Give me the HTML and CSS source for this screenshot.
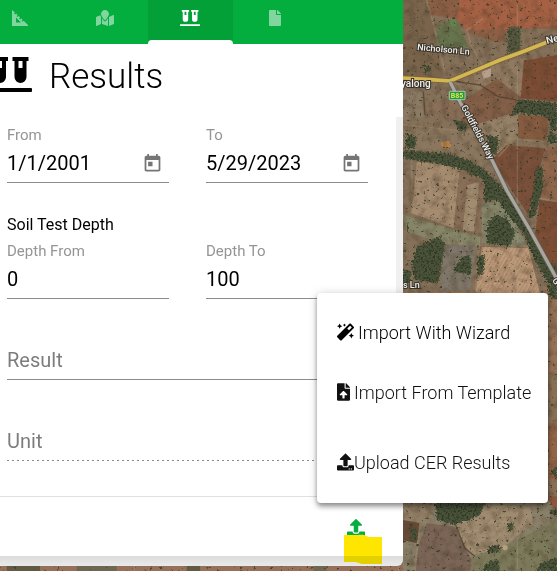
FILE: index.html
```html
<!DOCTYPE html>
<html lang="en">
<head>
<meta charset="utf-8">
<meta name="viewport" content="width=device-width, initial-scale=1">
<title>Results</title>
<link rel="stylesheet" href="styles.css">
</head>
<body>
<svg class="defs" aria-hidden="true">
  <symbol id="tubes" viewBox="0 0 44 35"><path fill-rule="evenodd" d="M4 0h16v4h-2v16a6 6 0 0 1-12 0V4H4zM10 4v7h4V4zM24.500 0h16v4h-2v16a6 6 0 0 1-12 0V4h-2zM30.500 4v7h4V4zM1 31h42a1 1 0 0 1 1 1v2a1 1 0 0 1-1 1H1a1 1 0 0 1-1-1v-2a1 1 0 0 1 1-1z"/></symbol>
  <symbol id="today" viewBox="0 0 24 24"><path d="M19 3h-1V1h-2v2H8V1H6v2H5c-1.110 0-1.990.9-1.990 2L3 19c0 1.100.89 2 2 2h14c1.100 0 2-.9 2-2V5c0-1.100-.9-2-2-2zm0 16H5V8h14v11zM7 10h5v5H7z"/></symbol>
  <symbol id="upload" viewBox="0 0 512 512"><path d="M296 384h-80c-13.300 0-24-10.700-24-24V192h-87.700c-17.800 0-26.700-21.500-14.100-34.100L242.300 5.700c7.500-7.500 19.800-7.500 27.300 0l152.200 152.200c12.600 12.600 3.700 34.100-14.100 34.100H320v168c0 13.300-10.700 24-24 24zm216-8v112c0 13.300-10.700 24-24 24H24c-13.300 0-24-10.700-24-24V376c0-13.300 10.700-24 24-24h136v8c0 30.900 25.100 56 56 56h80c30.900 0 56-25.100 56-56v-8h136c13.300 0 24 10.700 24 24zm-124 88c0-11-9-20-20-20s-20 9-20 20 9 20 20 20 20-9 20-20zm64 0c0-11-9-20-20-20s-20 9-20 20 9 20 20 20 20-9 20-20z"/></symbol>
</svg>

<svg class="map" viewBox="0 0 557 571" preserveAspectRatio="xMinYMin slice" role="img" aria-label="Satellite map">
  <defs>
    <filter id="grain" x="0" y="0" width="100%" height="100%" color-interpolation-filters="sRGB">
      <feTurbulence type="fractalNoise" baseFrequency="0.12" numOctaves="4" seed="4"/>
      <feColorMatrix values="0 0 0 0 0.3  0 0 0 0 0.24  0 0 0 0 0.17  1.6 0 0 0 -0.66"/>
    </filter>
    <filter id="scrub" x="0" y="0" width="100%" height="100%" color-interpolation-filters="sRGB">
      <feTurbulence type="fractalNoise" baseFrequency="0.3" numOctaves="2" seed="11"/>
      <feColorMatrix values="0 0 0 0 0.22  0 0 0 0 0.23  0 0 0 0 0.14  12 0 0 0 -8.2"/>
    </filter>
    <filter id="canopy" x="-5%" y="-5%" width="110%" height="110%" color-interpolation-filters="sRGB">
      <feTurbulence type="fractalNoise" baseFrequency="0.16" numOctaves="3" seed="7" result="n"/>
      <feDisplacementMap in="SourceGraphic" in2="n" scale="18" xChannelSelector="R" yChannelSelector="G" result="d"/>
      <feColorMatrix in="n" values="0 0 0 0 0.18  0 0 0 0 0.22  0 0 0 0 0.14  5 0 0 0 -2.400" result="s"/>
      <feComposite in="s" in2="d" operator="in" result="t"/>
      <feMerge><feMergeNode in="d"/><feMergeNode in="t"/></feMerge>
    </filter>
    <pattern id="furrow" width="14" height="10" patternUnits="userSpaceOnUse" patternTransform="rotate(-60)"><path d="M0 3h14" stroke="#cdb08f" stroke-width="3"/></pattern>
  </defs>
  <rect width="557" height="571" fill="#857059"/>
  <g transform="translate(400 0) scale(.3333)">
    <path fill="#8d6046" d="M85 0H480V90L330 80 300 130 210 100 170 55 90 45z"/>
    <path fill="#a66144" d="M180 0H480V75L380 85 200 90 170 60z"/>
    <path fill="#7a654c" d="M0 0H85L130 240H0z"/>
    <path fill="#66744d" d="M115 75 170 60 205 140 150 150 105 135z"/>
    <circle cx="159" cy="69" r="11" fill="#64824e"/>
    <path fill="#917a61" d="M230 200 368 175V300L150 250z"/>
    <path fill="#845f47" d="M240 270 290 235 365 295 350 340 190 390 170 310z"/>
    <path fill="#7c4c34" d="M372 182 471 165V305L362 295z"/>
    <path fill="#865b3f" d="M355 345 445 350 440 420 355 415z"/>
    <path fill="#8b7059" d="M70 310 180 305 200 355 90 350z"/>
    <path fill="#8a7a64" d="M9 275 65 275 70 350 9 360z"/>
    <path fill="#8b775f" d="M9 380 250 400 290 475 240 500 160 460 9 450z"/>
    <path fill="#948167" d="M225 375 350 335 350 410 290 465z"/>
    <path fill="#a58c70" d="M50 485 180 500 205 700 35 640z"/>
    <path fill="#886e57" d="M180 498 255 530 245 690 205 712 160 690z"/>
    <path fill="#a18c70" d="M202 555 238 545 222 695 188 690z"/>
    <path fill="#7b503a" d="M320 435 435 445 385 645 275 480z"/>
    <path fill="#8e664c" d="M436 440 471 440V605L418 590z"/>
    <path fill="#7d4e35" d="M420 600 471 605V850L405 700z"/>
    <path fill="#868568" d="M9 645 240 710 240 740 130 730 20 695z"/>
    <path fill="#7f776a" d="M130 730 230 735 210 870 120 870z"/>
    <path fill="#85866b" d="M245 610 320 600 380 740 245 730z"/>
    <path fill="#b59172" d="M245 740 385 745 420 880 225 890z"/>
    <path fill="url(#furrow)" opacity=".5" d="M245 740 385 745 420 880 225 890z"/>
    <path fill="#9b7251" d="M9 875H230V882H9z"/>
    <path fill="#987459" d="M430 860H471V1130H430z"/>
    <path fill="#8b7257" d="M430 1120H471V1270H430z"/>
    <path fill="#95674b" d="M430 1270H471V1440H430z"/>
    <path fill="#8b7158" d="M430 1440H471V1490H430z"/>
    <path fill="#8a8069" d="M9 1500H450L471 1600V1713H9z"/>
    <path fill="#917e66" d="M9 1510 110 1515 80 1570 9 1560z"/>
    <path fill="#664b37" d="M9 1560 60 1570 50 1630 9 1620z"/>
    <path fill="#7b6556" d="M80 1570 165 1580 215 1680 210 1713H45L55 1640z"/>
    <path fill="#9f8b70" d="M165 1570 260 1515 390 1520 400 1570 310 1640 225 1665 195 1640z"/>
    <path fill="#7d7a5b" d="M310 1640 471 1560V1713H220L225 1670z"/>
    <path fill="#8c583e" d="M440 1490H471V1540z"/>
    <path fill="#97705a" d="M-1200 1695H9V1713H-1200z"/>
    <path fill="#605b42" d="M-1180 1695h100v20h-100zM-640 1695h40v20h-40z"/>
    <path fill="#6f6752" d="M-970 1695h120v20h-120zM-260 1695h40v20h-40z"/>
    <path stroke="#a18b6b" stroke-width="5" fill="none" d="M250 55 200 90 215 140 250 200M80 0 105 90 140 240M9 375 260 400 330 415 471 430M35 440 35 640M130 730 240 735 385 740M240 710 225 870M60 1570 45 1713M350 410 295 470M420 595 471 605" opacity=".55"/>
    <path stroke="#b39c7c" stroke-width="4" fill="none" d="M190 1600 240 1590 280 1560 330 1570 370 1540M280 1560 300 1610M300 1520 310 1560" opacity=".5"/>
    <path stroke="#4e3a2a" stroke-width="4" fill="none" d="M170 245 240 255 295 290 350 300M70 275 75 345M165 1570 195 1645 225 1670" opacity=".7"/>
    <path stroke="#a9a18b" stroke-width="2" d="M352 0V1713M-797 1690V1713M-5 1690V1713" opacity=".55"/>
    <path fill="#c48847" d="M122 428 145 422 155 438 130 448z"/>
    <path fill="#b7a08b" d="M245 215 272 205 275 228 250 236z"/>
    <circle cx="315" cy="1643" r="8" fill="#b7a07f"/>
  </g>
  <rect x="400" width="157" height="571" filter="url(#grain)" opacity=".6"/>
  <rect x="400" width="157" height="571" filter="url(#scrub)" opacity=".8"/>
  <rect y="562" width="410" height="9" filter="url(#scrub)" opacity=".8"/>
  <g transform="translate(400 0) scale(.3333)">
    <g fill="#4a5239" filter="url(#canopy)">
      <path d="M9 450 150 462 205 480 255 510 300 555 345 610 385 680 430 770 470 800V865L440 845 400 770 370 700 320 640 275 570 240 535 190 510 110 490 9 475z"/>
      <path d="M262 665 290 645 322 655 345 700 330 738 260 730z"/>
      <path d="M50 740 115 710 135 730 115 850 45 840 35 790z"/>
      <path d="M255 545 300 550 315 600 250 605z"/>
      <path d="M355 300 450 305 471 340 440 350 360 340 330 350z"/>
      <path d="M408 510 428 495 430 560 405 650 385 655z"/>
      <path d="M325 80 362 80 360 165 322 160z" opacity=".75"/>
      <path d="M445 310H471V390H450zM450 390 471 410V430H440zM20 400 50 410 45 445 15 445zM185 770 210 765 215 825 160 815zM235 770 255 765 250 820 230 825zM165 360 205 370 195 395 175 390zM260 405 295 410 292 465 270 460z"/>
      <path d="M440 855H471V900L450 890zM450 1410 471 1400V1440zM105 1508 255 1508 240 1545 210 1560 165 1575 110 1560z"/>
      <path d="M265 1640 300 1635 300 1655 265 1660zM265 1685 295 1680 300 1713H245zM420 1690 471 1675V1713H410zM445 1535 471 1525V1550zM30 1580 50 1590 50 1620 35 1625zM325 1570 340 1570 340 1590 325 1590z"/>
      <path d="M9 805 35 815 30 850 9 850zM70 195 95 200 90 215 75 215z"/>
    </g>
    <path d="M9 234 90 239 150 243 210 218 300 180 360 158 471 115" stroke="#766342" stroke-width="16" fill="none"/>
    <path d="M9 234 90 239 150 243 210 218 300 180 360 158 471 115" stroke="#d5b752" stroke-width="11" fill="none"/>
    <path d="M150 245 182 310 260 448 320 570 390 690 471 838" stroke="#625f59" stroke-width="14" fill="none"/>
    <path d="M150 245 182 310 260 448 320 570 390 690 471 838" stroke="#aaa69e" stroke-width="10" fill="none"/>
    <rect x="148" y="274" width="47" height="25" rx="3" fill="#189c46" stroke="#d7ead4" stroke-width="2"/>
  </g>
  <g class="map-labels">
    <text x="417" y="50" transform="rotate(5 417 50)">Nicholson Ln</text>
    <text class="town" x="401" y="87">yalong</text>
    <text class="town" x="547" y="44" transform="rotate(-14 547 44)">New</text>
    <text x="461" y="107" transform="rotate(62 461 107)">Goldfields Way</text>
    <text x="403" y="288">s Ln</text>
    <text class="shield" x="457" y="98">B85</text>
    <text x="552" y="280" transform="rotate(60 552 280)">G</text>
  </g>
</svg>

<main class="panel">
  <nav class="tabs" aria-label="Sections">
    <button class="tab" type="button" aria-label="Measure"><svg class="icon-16" viewBox="0 0 16 16"><path fill-rule="evenodd" d="M0 0 3 2.600 2 3.600 3 4.600 4.200 3.600 5.600 5 4.600 6 5.600 7 6.700 6 8.100 7.400 7.100 8.400 8.100 9.400 9.200 8.400 10.600 9.800 9.600 10.800 10.600 11.800 11.700 10.800 16 15V16H0zM4 7.500V12.500H9z"/></svg></button>
    <button class="tab" type="button" aria-label="Map"><svg class="icon-18" viewBox="0 0 576 512"><path d="M288 0c-69.590 0-126 56.410-126 126 0 56.260 82.350 158.800 113.900 196.020 6.390 7.540 17.820 7.540 24.200 0C331.650 284.800 414 182.260 414 126 414 56.410 357.590 0 288 0zM20.120 215.950A32.006 32.006 0 0 0 0 245.660v250.320c0 11.320 11.430 19.060 21.940 14.860L160 448V214.920c-8.840-15.980-16.070-31.540-21.250-46.420L20.120 215.950zM288 359.670c-14.070 0-27.380-6.180-36.510-16.960-19.660-23.200-40.570-49.620-59.490-76.720v182l192 64V266c-18.920 27.090-39.820 53.520-59.490 76.720-9.130 10.770-22.440 16.950-36.510 16.950zm266.060-198.510L416 224v288l139.880-55.950A31.996 31.996 0 0 0 576 426.340V176.020c0-11.320-11.430-19.060-21.940-14.860z"/></svg></button>
    <button class="tab active" type="button" aria-label="Results" aria-current="page"><svg class="icon-20"><use href="#tubes"/></svg></button>
    <button class="tab" type="button" aria-label="Report"><svg class="icon-16" viewBox="0 0 384 512"><path d="M224 136V0H24C10.700 0 0 10.700 0 24v464c0 13.300 10.700 24 24 24h336c13.300 0 24-10.700 24-24V160H248c-13.200 0-24-10.800-24-24zm160-14.100v6.100H256V0h6.100c6.400 0 12.500 2.500 17 7l97.900 98c4.500 4.500 7 10.600 7 16.900z"/></svg></button>
  </nav>

  <header class="title">
    <svg class="title-icon"><use href="#tubes"/></svg>
    <h1>Results</h1>
  </header>

  <form class="form">
    <div class="pair">
      <div class="field">
        <label for="from">From</label>
        <div class="control"><input id="from" type="text" value="1/1/2001"><button type="button" aria-label="Choose start date"><svg><use href="#today"/></svg></button></div>
      </div>
      <div class="field">
        <label for="to">To</label>
        <div class="control"><input id="to" type="text" value="5/29/2023"><button type="button" aria-label="Choose end date"><svg><use href="#today"/></svg></button></div>
      </div>
    </div>
    <h2>Soil Test Depth</h2>
    <div class="pair">
      <div class="field">
        <label for="depth-from">Depth From</label>
        <div class="control"><input id="depth-from" type="text" value="0"></div>
      </div>
      <div class="field">
        <label for="depth-to">Depth To</label>
        <div class="control"><input id="depth-to" type="text" value="100"></div>
      </div>
    </div>
    <div class="control single"><input type="text" placeholder="Result" aria-label="Result"></div>
    <div class="control single dashed"><input type="text" placeholder="Unit" aria-label="Unit" disabled></div>
  </form>

  <footer class="actions">
    <button class="upload" type="button" aria-label="Upload"><svg class="icon-18"><use href="#upload"/></svg></button>
    <svg class="marker" viewBox="0 0 38 29" aria-hidden="true"><path d="M0 0H20L25 2H38V29H18L12 27H0z"/><path class="marker-shade" d="M0 21H38V29H18L12 27H0z"/></svg>
  </footer>

  <div class="menu" role="menu">
    <button class="strong" type="button" role="menuitem"><svg viewBox="0 0 512 512"><path d="M224 96l16-32 32-16-32-16-16-32-16 32-32 16 32 16 16 32zM80 160l26.660-53.330L160 80l-53.340-26.670L80 0 53.340 53.330 0 80l53.340 26.670L80 160zm352 128l-26.660 53.330L352 368l53.340 26.670L432 448l26.660-53.330L512 368l-53.340-26.670L432 288zm70.620-193.770L417.770 9.380C411.530 3.120 403.340 0 395.150 0c-8.190 0-16.380 3.120-22.630 9.380L9.380 372.520c-12.500 12.500-12.500 32.760 0 45.250l84.850 84.850c6.250 6.250 14.440 9.370 22.620 9.370 8.190 0 16.380-3.120 22.630-9.370l363.140-363.150c12.500-12.480 12.500-32.750 0-45.240zM359.450 203.460l-50.910-50.910 86.600-86.600 50.910 50.910-86.600 86.600z"/></svg><span>Import With Wizard</span></button>
    <button type="button" role="menuitem"><svg class="narrow" viewBox="0 0 384 512"><path d="M224 136V0H24C10.700 0 0 10.700 0 24v464c0 13.300 10.700 24 24 24h336c13.300 0 24-10.700 24-24V160H248c-13.200 0-24-10.800-24-24zm65.180 216.010H224v80c0 8.840-7.160 16-16 16h-32c-8.840 0-16-7.160-16-16v-80H94.820c-14.280 0-21.410-17.290-11.270-27.360l96.420-95.700c6.650-6.610 17.390-6.610 24.040 0l96.420 95.700c10.150 10.070 3.030 27.360-11.250 27.360zM377 105L279.100 7c-4.500-4.500-10.600-7-17-7H256v128h128v-6.100c0-6.300-2.500-12.400-7-16.900z"/></svg><span>Import From Template</span></button>
    <button class="tight" type="button" role="menuitem"><svg><use href="#upload"/></svg><span>Upload CER Results</span></button>
  </div>
</main>
</body>
</html>
```
FILE: styles.css
```css
* { box-sizing: border-box; }

body {
  margin: 0;
  min-height: 100vh;
  overflow-x: hidden;
  font-family: Roboto, "Liberation Sans", sans-serif;
  color: #000;
}

button {
  margin: 0;
  padding: 0;
  border: 0;
  background: none;
  color: inherit;
  font: inherit;
  cursor: pointer;
}

svg { fill: currentColor; }

.defs { position: absolute; width: 0; height: 0; }

.map {
  position: fixed;
  inset: 0;
  width: 100%;
  height: 100%;
}

.map-labels text {
  font: 500 9px Roboto, sans-serif;
  fill: #f2f0ec;
  stroke: #37322a;
  stroke-width: 2px;
  paint-order: stroke;
}

.map-labels .town { font-size: 10px; }

.map-labels .shield {
  font-size: 7px;
  font-weight: 700;
  fill: #ece34c;
  stroke: none;
  text-anchor: middle;
}

.panel {
  position: relative;
  width: 100%;
  max-width: 403px;
  padding-bottom: 10px;
  border-bottom-right-radius: 6px;
  background: linear-gradient(#dcdcdc, #e9e9e9) bottom / 100% 10px no-repeat, #fff;
}

.tabs {
  display: flex;
  height: 44px;
  padding-left: 63px;
  background: #03ad3e;
  color: #fff;
}

.tab {
  display: flex;
  flex: 0 0 85px;
  align-items: center;
  justify-content: center;
  padding: 0 2px 8px 0;
}

.tab:first-child { margin-left: -85px; }

.tab svg { opacity: .5; }

.tab.active {
  background: linear-gradient(#03a038, #03a038) top / 100% 40px no-repeat;
  position: relative;
}

.tab.active::after {
  content: "";
  position: absolute;
  inset: auto 0 0;
  height: 4px;
  border-radius: 4px 4px 0 0;
  background: #fff;
}

.tab.active svg { opacity: 1; }

.icon-16 { width: 16px; height: 16px; }
.icon-18 { width: 18px; height: 18px; }
.icon-20 { width: 20px; height: 16px; }

.title {
  display: flex;
  align-items: center;
  gap: 17px;
  height: 73px;
  padding-bottom: 12px;
  overflow: hidden;
}

.title-icon {
  flex: none;
  width: 44px;
  height: 35px;
  margin-left: -12px;
}

h1 {
  margin: 0;
  padding-top: 4px;
  font-size: 35px;
  font-weight: 300;
  line-height: 44px;
}

.form {
  padding: 8px 28px 35px 7px;
  border-right: 7px solid #f0f0f0;
  border-bottom: 1px solid #e0e0e0;
}

.pair {
  display: grid;
  grid-template-columns: 1fr 1fr;
  gap: 37px;
}

.field label {
  display: block;
  color: #959595;
  font-size: 15px;
  line-height: 20px;
}

.control {
  display: flex;
  align-items: center;
  height: 38px;
  padding-right: 6px;
  border-bottom: 1px solid #8c8c8c;
}

.control input {
  flex: 1;
  width: 100%;
  min-width: 0;
  padding: 0 0 2px;
  border: 0;
  outline: 0;
  background: none;
  color: #000;
  font: 400 20px/24px Roboto, sans-serif;
}

.control input::placeholder { color: #7d7d7d; opacity: 1; }

.control svg {
  display: block;
  width: 21px;
  height: 21px;
  color: #757575;
}

h2 {
  margin: 32px 0 6px;
  font-size: 16px;
  font-weight: 400;
  line-height: 20px;
}

.single { margin-top: 43px; }

.dashed {
  border-bottom: 0;
  background: repeating-linear-gradient(90deg, #8c8c8c 0 2px, transparent 2px 5px) bottom / 100% 1px no-repeat;
}

.actions {
  position: relative;
  display: flex;
  justify-content: flex-end;
  height: 59px;
  padding: 22px 38px 0 0;
}

.upload {
  height: 18px;
  color: #03ad3e;
}

.upload svg { display: block; }

.marker {
  position: absolute;
  top: 38px;
  right: 21px;
  width: 38px;
  height: 29px;
  fill: #ffe600;
}

.marker-shade { fill: #e3d000; }

.menu {
  position: absolute;
  top: 293px;
  left: 317px;
  width: 231px;
  padding: 9px 0 11px;
  border-radius: 4px;
  background: #fff;
  box-shadow: 0 2px 4px -1px #0003, 0 4px 5px #0004, 0 1px 10px #0003;
}

.menu button {
  display: flex;
  align-items: center;
  gap: 4px;
  width: 100%;
  height: 60px;
  padding: 0 20px;
  color: #111;
  font-size: 18px;
  font-weight: 300;
  white-space: nowrap;
}

.menu .strong { color: #000; }

.menu .tight { gap: 0; margin-top: 10px; }

.menu svg { flex: none; width: 17px; height: 18px; }

.menu .narrow { width: 13px; }
```
